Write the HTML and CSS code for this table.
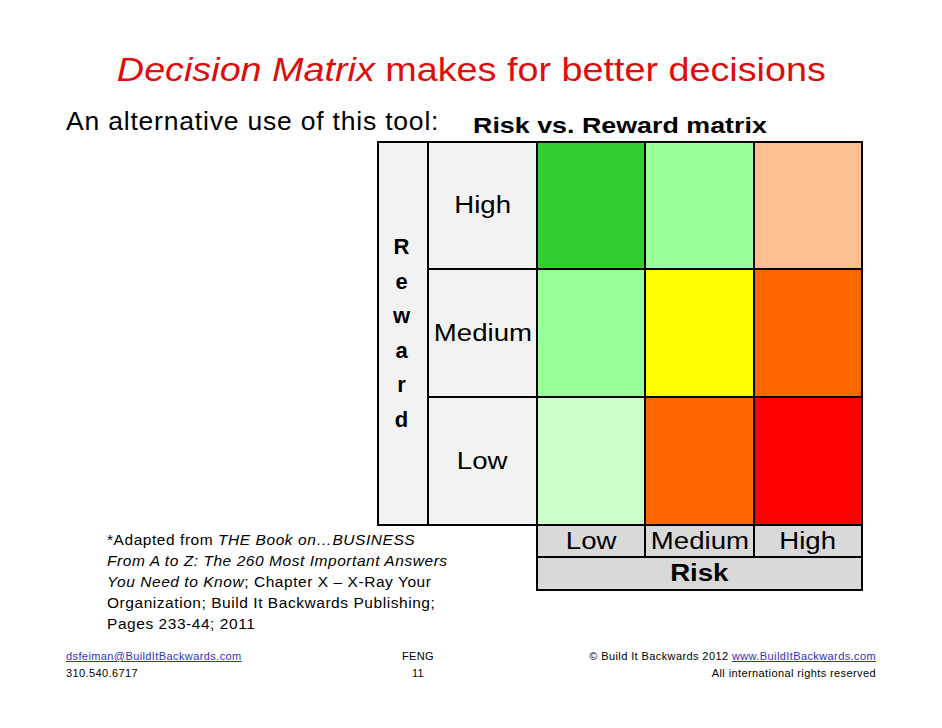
FILE: index.html
```html
<!DOCTYPE html>
<html>
<head>
<meta charset="utf-8">
<link rel="stylesheet" href="styles.css">
</head>
<body>
<div class="slide">
  <h1 class="title"><span class="title-text"><em>Decision Matrix</em> makes for better decisions</span></h1>
  <div class="subhead"><span class="intro">An alternative use of this tool:</span><span class="matrix-name">Risk vs. Reward matrix</span></div>
  <div class="matrix">
    <div class="reward">R<br>e<br>w<br>a<br>r<br>d</div>
    <div class="label"><span class="wide">High</span></div>
    <div class="cell c-dkgreen"></div>
    <div class="cell c-ltgreen"></div>
    <div class="cell c-peach"></div>
    <div class="label"><span class="wide">Medium</span></div>
    <div class="cell c-ltgreen"></div>
    <div class="cell c-yellow"></div>
    <div class="cell c-orange"></div>
    <div class="label"><span class="wide">Low</span></div>
    <div class="cell c-pale"></div>
    <div class="cell c-orange"></div>
    <div class="cell c-red"></div>
  </div>
  <div class="lower">
    <p class="footnote">*Adapted from <em>THE Book on…BUSINESS<br>From A to Z: The 260 Most Important Answers<br>You Need to Know</em>; Chapter X – X-Ray Your<br>Organization; Build It Backwards Publishing;<br>Pages 233-44; 2011</p>
    <div class="risk-axis">
      <div class="axis-label"><span class="wide">Low</span></div>
      <div class="axis-label"><span class="wide">Medium</span></div>
      <div class="axis-label"><span class="wide">High</span></div>
      <div class="axis-title"><span class="wide">Risk</span></div>
    </div>
  </div>
  <div class="footer">
    <div class="f-left"><a class="link" href="#">dsfeiman@BuildItBackwards.com</a><br>310.540.6717</div>
    <div class="f-center">FENG<br>11</div>
    <div class="f-right">© Build It Backwards 2012 <a class="link" href="#">www.BuildItBackwards.com</a><br>All international rights reserved</div>
  </div>
</div>
</body>
</html>
```
FILE: styles.css
```css
html, body {
  margin: 0;
  padding: 0;
  background: #ffffff;
}
.slide {
  width: 942px;
  height: 728px;
  font-family: "Liberation Sans", Arial, sans-serif;
  color: #000;
  overflow: hidden;
}
.title {
  margin: 0;
  padding-top: 46px;
  height: 46px;
  text-align: center;
  font-weight: normal;
  font-size: 34px;
  line-height: 46px;
  color: #e00c0c;
}
.title-text {
  display: inline-block;
  transform: scaleX(1.11);
  transform-origin: center;
}
.title em {
  font-style: italic;
}
.subhead {
  height: 35px;
  padding-top: 14px;
  padding-left: 66px;
  line-height: 30px;
  white-space: nowrap;
}
.intro {
  display: inline-block;
  width: 407px;
  font-size: 26.5px;
  letter-spacing: 0.8px;
}
.matrix-name {
  display: inline-block;
  font-size: 22px;
  font-weight: bold;
  vertical-align: -3px;
  transform: scaleX(1.22);
  transform-origin: left;
}
.wide {
  display: inline-block;
  transform: scaleX(1.2);
  transform-origin: center;
}
.matrix {
  margin-left: 377px;
  width: 486px;
  box-sizing: border-box;
  display: grid;
  grid-template-columns: 48px 107px 106px 107px 106px;
  grid-template-rows: 125px 126px 126px;
  gap: 2px;
  padding: 2px;
  background: #000;
}
.reward {
  grid-row: 1 / 4;
  background: #f2f2f2;
  display: flex;
  align-items: center;
  justify-content: center;
  font-weight: bold;
  font-size: 22px;
  line-height: 34.5px;
  text-align: center;
  padding-right: 3px;
}
.label {
  background: #f2f2f2;
  display: flex;
  align-items: center;
  justify-content: center;
  font-size: 23px;
}
.cell { background: #fff; }
.c-dkgreen { background: #33cc33; }
.c-ltgreen { background: #99ff99; }
.c-peach { background: #fac090; }
.c-yellow { background: #ffff00; }
.c-orange { background: #ff6600; }
.c-pale { background: #ccffcc; }
.c-red { background: #ff0000; }
.lower {
  display: flex;
  align-items: flex-start;
}
.footnote {
  margin: 3px 0 0 107px;
  width: 429px;
  font-size: 15.5px;
  line-height: 21px;
  letter-spacing: 0.55px;
  white-space: nowrap;
}
.footnote em { font-style: italic; }
.risk-axis {
  width: 327px;
  box-sizing: border-box;
  display: grid;
  grid-template-columns: 106px 107px 106px;
  grid-template-rows: 30px 31px;
  gap: 2px;
  padding: 0 2px 2px 2px;
  background: #000;
}
.axis-label {
  background: #d9d9d9;
  display: flex;
  align-items: center;
  justify-content: center;
  font-size: 23px;
}
.axis-title {
  grid-column: 1 / 4;
  background: #d9d9d9;
  display: flex;
  align-items: center;
  justify-content: center;
  font-size: 23px;
  font-weight: bold;
}
.footer {
  margin-top: 14px;
  padding: 0 66px;
  display: grid;
  grid-template-columns: 300px 104px 1fr;
  font-size: 11px;
  line-height: 17px;
  letter-spacing: 0.4px;
  color: #000;
}
.f-center { text-align: center; }
.f-right { text-align: right; }
.link {
  color: #3030c8;
  text-decoration: underline;
}
```
